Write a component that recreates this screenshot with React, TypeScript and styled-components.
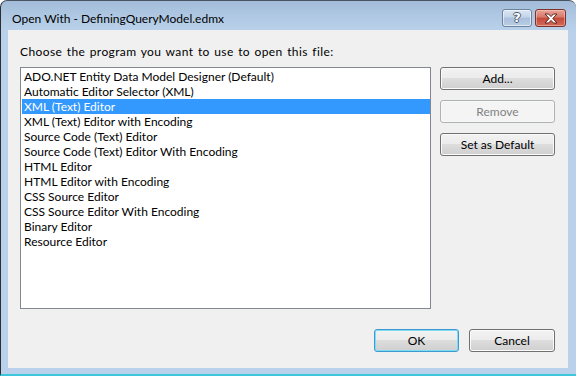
import React, { useState } from "react";
import styled, { createGlobalStyle } from "styled-components";

const GlobalStyle = createGlobalStyle`
  html, body {
    margin: 0;
    padding: 0;
    background: #ffffff;
  }
  body {
    font-family: "Lato", "Noto Sans", sans-serif;
    font-size: 12px;
  }
`;

const programs = [
  "ADO.NET Entity Data Model Designer (Default)",
  "Automatic Editor Selector (XML)",
  "XML (Text) Editor",
  "XML (Text) Editor with Encoding",
  "Source Code (Text) Editor",
  "Source Code (Text) Editor With Encoding",
  "HTML Editor",
  "HTML Editor with Encoding",
  "CSS Source Editor",
  "CSS Source Editor With Encoding",
  "Binary Editor",
  "Resource Editor",
];

function App() {
  const [selected, setSelected] = useState(2);

  return (
    <>
      <GlobalStyle />
      <Window>
        <TitleBar>
          <Caption>Open With - DefiningQueryModel.edmx</Caption>
          <CaptionButtons>
            <HelpButton>?</HelpButton>
            <CloseButton>
              <svg width="16" height="11" viewBox="0 0 16 11">
                <path
                  d="M2 1 H5.5 L8 3.6 L10.5 1 H14 L9.8 5.5 L14 10 H10.5 L8 7.4 L5.5 10 H2 L6.2 5.5 Z"
                  fill="#ffffff"
                  stroke="#5b2420"
                  strokeWidth="1"
                  strokeLinejoin="round"
                />
              </svg>
            </CloseButton>
          </CaptionButtons>
        </TitleBar>

        <Client>
          <Prompt>Choose the program you want to use to open this file:</Prompt>
          <MainRow>
            <ListBox>
              {programs.map((p, i) => (
                <ListItem key={p} $selected={i === selected} onClick={() => setSelected(i)}>
                  {p}
                </ListItem>
              ))}
            </ListBox>
            <SideButtons>
              <PushButton>Add...</PushButton>
              <PushButton disabled>Remove</PushButton>
              <PushButton>Set as Default</PushButton>
            </SideButtons>
          </MainRow>
          <Footer>
            <PushButton $default $width={85}>OK</PushButton>
            <PushButton $width={86}>Cancel</PushButton>
          </Footer>
        </Client>
      </Window>
    </>
  );
}

const Window = styled.div`
  width: 576px;
  height: 376px;
  box-sizing: border-box;
  display: flex;
  flex-direction: column;
  background: linear-gradient(to bottom, #a2bcd9 0px, #b3cbe5 20px, #b9d1ea 30px, #b9d1ea 100%);
  border-top: 1px solid #4a5564;
  border-left: 1px solid #2b2f35;
  border-bottom: 2px solid #3cc6dc;
  border-radius: 7px 7px 0 0;
  overflow: hidden;
`;

const TitleBar = styled.div`
  height: 29px;
  display: flex;
  align-items: flex-start;
  justify-content: space-between;
  padding: 8px 10px 0 11px;
  box-sizing: border-box;
`;

const Caption = styled.div`
  margin-top: 2px;
  line-height: 16px;
  color: #000000;
  font-size: 12px;
  white-space: nowrap;
`;

const CaptionButtons = styled.div`
  display: flex;
  gap: 3px;
`;

const CaptionButton = styled.div`
  width: 30px;
  height: 18px;
  box-sizing: border-box;
  border-radius: 3px;
  display: flex;
  align-items: center;
  justify-content: center;
`;

const HelpButton = styled(CaptionButton)`
  border: 1px solid #6c83a0;
  background: linear-gradient(to bottom, #dbe6f3 0%, #c3d4e8 45%, #a9c0dc 50%, #b9cde4 100%);
  box-shadow: inset 0 0 0 1px rgba(255, 255, 255, 0.55);
  color: #ffffff;
  font-family: "DejaVu Sans", sans-serif;
  font-weight: bold;
  font-size: 13px;
  line-height: 16px;
  text-shadow: -1px 0 #4b5a6e, 1px 0 #4b5a6e, 0 -1px #4b5a6e, 0 1px #4b5a6e;
`;

const CloseButton = styled(CaptionButton)`
  width: 31px;
  border: 1px solid #7e3128;
  background: linear-gradient(to bottom, #e7a497 0%, #d7786a 45%, #c4493a 50%, #d26b5c 100%);
  box-shadow: inset 0 0 0 1px rgba(255, 220, 210, 0.45);
`;

const Client = styled.div`
  flex: 1;
  margin: 0 8px 6px 7px;
  background: #f0f0f0;
  display: flex;
  flex-direction: column;
  padding: 14px 13px 16px 12px;
`;

const Prompt = styled.div`
  line-height: 16px;
  margin-bottom: 7px;
  color: #000000;
  white-space: nowrap;
  letter-spacing: 0.4px;
  word-spacing: 1px;
`;

const MainRow = styled.div`
  display: flex;
  gap: 9px;
  height: 242px;
`;

const ListBox = styled.div`
  width: 411px;
  height: 242px;
  box-sizing: border-box;
  border: 1px solid #828790;
  background: #ffffff;
  padding: 1px 0 1px 1px;
  display: flex;
  flex-direction: column;
`;

const ListItem = styled.div<{ $selected?: boolean }>`
  height: 15px;
  line-height: 15px;
  padding-left: 2px;
  white-space: nowrap;
  color: ${(p) => (p.$selected ? "#ffffff" : "#000000")};
  background: ${(p) => (p.$selected ? "#3399ff" : "transparent")};
  cursor: default;
`;

const SideButtons = styled.div`
  display: flex;
  flex-direction: column;
  gap: 10px;
  width: 115px;
`;

const Footer = styled.div`
  margin-top: 20px;
  display: flex;
  justify-content: flex-end;
  gap: 10px;
`;

const PushButton = styled.button<{ $default?: boolean; $width?: number }>`
  width: ${(p) => (p.$width ? `${p.$width}px` : "100%")};
  height: 23px;
  box-sizing: border-box;
  padding: 0;
  font-family: "Lato", "Noto Sans", sans-serif;
  font-size: 12px;
  color: #000000;
  border-radius: 3px;
  border: 1px solid ${(p) => (p.$default ? "#3c9ad0" : "#707070")};
  background: linear-gradient(to bottom, #f2f2f2 0%, #ebebeb 50%, #dddddd 50%, #cfcfcf 100%);
  box-shadow: inset 0 0 0 1px ${(p) => (p.$default ? "#7fdcf5" : "#fbfbfb")};

  &:disabled {
    color: #838383;
    border-color: #adb2b5;
    background: #f4f4f4;
    box-shadow: inset 0 0 0 1px #f8f8f8;
  }
`;

export default App;
